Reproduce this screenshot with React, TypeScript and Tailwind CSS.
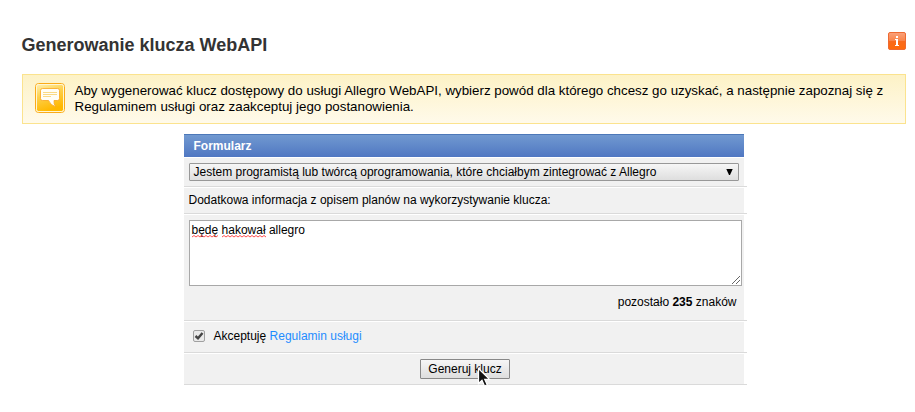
import type { ReactNode } from "react";

function Row({ className, children }: { className: string; children: ReactNode }) {
  return (
    <div className="mb-px w-[563px] border-b border-[#dadada]">
      <div className={`w-[560px] bg-[#f1f1f1] ${className}`}>{children}</div>
    </div>
  );
}

function InfoIcon() {
  return (
    <svg width="18" height="18" viewBox="0 0 18 18">
      <defs>
        <linearGradient id="info" x1="0" y1="0" x2="0" y2="1">
          <stop offset="0" stopColor="#f9a27c" />
          <stop offset="0.5" stopColor="#fa8347" />
          <stop offset="0.52" stopColor="#f96a1c" />
          <stop offset="1" stopColor="#ff6a0a" />
        </linearGradient>
      </defs>
      <rect x="0.5" y="0.5" width="17" height="17" rx="1.5" fill="url(#info)" stroke="#ee6a32" />
      <path d="M8 4h2v2H8zM7 7h3v6h1v1H7v-1h1V8H7z" fill="#fff" />
    </svg>
  );
}

function NoteIcon() {
  return (
    <svg className="shrink-0" width="30" height="30" viewBox="0 0 30 30">
      <defs>
        <linearGradient id="note" x1="0" y1="0" x2="0.35" y2="1">
          <stop offset="0" stopColor="#fff0b0" />
          <stop offset="0.45" stopColor="#fdd04c" />
          <stop offset="1" stopColor="#ffb800" />
        </linearGradient>
      </defs>
      <rect x="0.5" y="0.5" width="29" height="29" rx="3" fill="#fff7d8" stroke="#fbab18" />
      <rect x="1.5" y="1.5" width="27" height="27" rx="2" fill="url(#note)" stroke="#fff6d4" />
      <path
        d="M7.500 5.500h15a2 2 0 0 1 2 2v8a2 2 0 0 1-2 2h-3.500q-.5 3.500 1.800 6.300q-5.300-1.500-7.300-6.300h-6a2 2 0 0 1-2-2v-8a2 2 0 0 1 2-2z"
        fill="#fffdf6"
        stroke="#f9a51c"
        strokeWidth="0.8"
      />
      <path d="M8 9.500h14M8 11.500h14M8 13.500h8" stroke="#f9cf68" strokeWidth="0.8" />
    </svg>
  );
}

function Misspelled({ width, children }: { width: number; children: string }) {
  const points = Array.from({ length: Math.floor(width / 2) + 1 }, (_, i) => `${i * 2},${i % 2 ? 0.5 : 2}`).join(" ");
  return (
    <span className="relative inline-block">
      {children}
      <svg className="absolute left-0 top-[13px]" width={width} height="3" viewBox={`0 0 ${width} 3`}>
        <polyline points={points} fill="none" stroke="#ff3c3c" strokeWidth="0.9" />
      </svg>
    </span>
  );
}

export default function App() {
  return (
    <div className="relative h-[412px] w-[915px] overflow-hidden bg-white pl-[22px] pr-[9px] pt-8 font-['Liberation_Sans',Arial,sans-serif] text-xs leading-4 text-black">
      <div className="flex h-[42px] items-start justify-between">
        <h1 className="-ml-[0.5px] pt-px text-[18px] font-bold leading-6 text-[#333]">Generowanie klucza WebAPI</h1>
        <InfoIcon />
      </div>

      <div className="flex h-[50px] border border-[#fbe38e] bg-linear-to-b from-[#fdf2c6] to-[#fffaea] pl-3 pt-2">
        <NoteIcon />
        <p className="ml-[9.5px] whitespace-nowrap text-[13.34px] leading-4">
          Aby wygenerować klucz dostępowy do usługi Allegro WebAPI, wybierz powód dla którego chcesz go uzyskać, a następnie zapoznaj się z
          <br />
          Regulaminem usługi oraz zaakceptuj jego postanowienia.
        </p>
      </div>

      <form className="ml-[162px] mt-[10px] w-[563px]">
        <div className="mb-px h-[23px] w-[560px] border-t border-[#4d78b8] bg-linear-to-b from-[#7199d0] to-[#5077c2] pl-[9.5px] pt-[3px] font-bold text-white">
          Formularz
        </div>
        <Row className="h-7 pl-[5px] pt-[5px]">
          <div className="flex h-[18px] w-[550px] items-center justify-between rounded-[1px] border border-[#989898] bg-linear-to-b from-[#f6f6f6] to-[#dedede] pl-[3.5px] pr-[5px]">
            <span>Jestem programistą lub twórcą oprogramowania, które chciałbym zintegrować z Allegro</span>
            <svg width="7" height="6" viewBox="0 0 7 6">
              <path d="M0.300 0h6.400L4 6H3z" />
            </svg>
          </div>
        </Row>
        <Row className="h-[25px] pl-[4.5px] pt-1">Dodatkowa informacja z opisem planów na wykorzystywanie klucza:</Row>
        <Row className="h-[105px] pl-[5px] pt-[5px]">
          <div className="relative h-[66px] w-[553px] border border-[#a8a8a8] bg-white pl-[1.5px] pt-px">
            <Misspelled width={27}>będę</Misspelled> <Misspelled width={44}>hakował</Misspelled> allegro
            <svg className="absolute bottom-px right-px" width="8" height="8" viewBox="0 0 8 8">
              <path d="M0 8L8 0M4 8L8 4" stroke="#555" strokeWidth="0.9" />
            </svg>
          </div>
          <div className="mt-2 pr-[7.5px] text-right">
            pozostało <b>235</b> znaków
          </div>
        </Row>
        <Row className="flex h-[30px] pl-[9px] pt-[6px]">
          <svg className="mt-[2px]" width="12" height="12" viewBox="0 0 12 12">
            <rect x="0.5" y="0.5" width="11" height="11" rx="1.5" fill="#e9e9e9" stroke="#a0a0a0" />
            <path d="M2.500 6L5 8.300L9.500 3" fill="none" stroke="#444" strokeWidth="2.400" />
          </svg>
          <span className="ml-[8.5px]">
            Akceptuję <a className="text-[#1e8cff]">Regulamin usługi</a>
          </span>
        </Row>
        <Row className="flex h-[30px] justify-center pt-[5px]">
          <button type="button" className="ml-[2px] h-5 w-[90px] rounded-[1px] border border-[#888] bg-linear-to-b from-[#f6f6f6] to-[#dedede] leading-4">
            Generuj klucz
          </button>
        </Row>
      </form>

      <svg className="absolute left-[477px] top-[367px]" width="14" height="21" viewBox="0 0 14 21">
        <path d="M1.500 1.500v15l3.500-3.300l2.500 5.800l2.700-1.200l-2.500-5.500h4.800z" fill="#111" stroke="#fff" strokeWidth="1.200" />
      </svg>
    </div>
  );
}
